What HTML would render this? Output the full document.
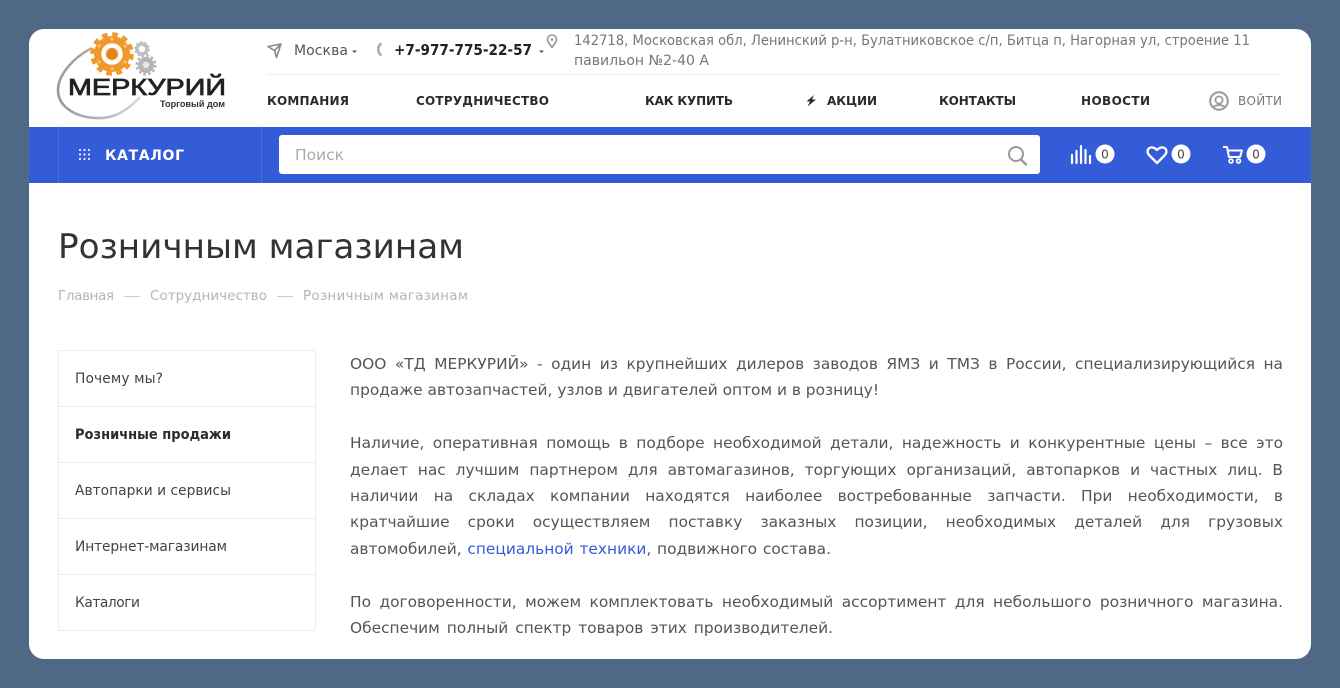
<!DOCTYPE html>
<html lang="ru"><head><meta charset="utf-8"><title>Розничным магазинам</title>
<style>
html,body{margin:0;padding:0}
body{width:1340px;height:688px;overflow:hidden;background:#4e6885;position:relative;font-family:"DejaVu Sans","Liberation Sans",sans-serif}
#card{position:absolute;left:29px;top:29px;width:1282px;height:630px;background:#fff;border-radius:15px;overflow:hidden}
#bar{position:absolute;left:0;top:98px;width:1282px;height:56px;background:#345cd8}
.d{position:absolute;top:0;width:1px;height:56px;background:#4a6ede}
#search{position:absolute;left:250px;top:8px;width:761px;height:39px;background:#fff;border-radius:3px}
#hr{position:absolute;left:238px;top:45px;width:1015px;height:1px;background:#eee}
.row{position:absolute;left:29px;width:256px;height:55px;border:1px solid #ececec}
svg#o{position:absolute;left:0;top:0}
.l{position:absolute;left:350px;width:933px;height:26px;line-height:26px;font-size:15.4px;color:#555;white-space:nowrap;text-align:justify;text-align-last:justify}
.l a{color:#345cd8;text-decoration:none}
</style></head><body>
<div id="card">
<div id="hr"></div>
<div id="bar"><div class="d" style="left:29px"></div><div class="d" style="left:232px"></div><div id="search"></div></div>
<div class="row" style="top:321px;border-radius:2px 2px 0 0"></div>
<div class="row" style="top:377px"></div>
<div class="row" style="top:433px"></div>
<div class="row" style="top:489px"></div>
<div class="row" style="top:545px;border-radius:0 0 2px 2px"></div>
</div>
<svg id="o" width="1340" height="688" viewBox="0 0 1340 688" font-family="'DejaVu Sans','Liberation Sans',sans-serif">
<defs><linearGradient id="rg" x1="0" y1="0" x2="1" y2="0"><stop offset="0" stop-color="#999"/><stop offset=".6" stop-color="#bbb"/><stop offset="1" stop-color="#ddd"/></linearGradient></defs>
<!-- logo -->
<path d="M92 48 C72 58 58 76 58 90 C58 108 78 119 102 118 C118 117 130 108 140 97" fill="none" stroke="url(#rg)" stroke-width="2.6"/>
<circle cx="112" cy="54" r="18" fill="#f0982a"/>
<circle cx="112" cy="54" r="19.800" fill="none" stroke="#f0982a" stroke-width="4" stroke-dasharray="5.700 4.670"/>
<circle cx="112" cy="54" r="8.500" fill="none" stroke="#fff" stroke-width="4.500"/>
<circle cx="112" cy="54" r="5" fill="#e0831c"/>
<g fill="#f9c87a"><circle cx="112" cy="39" r="1.500"/><circle cx="125" cy="46" r="1.500"/><circle cx="125" cy="62" r="1.500"/><circle cx="112" cy="69" r="1.500"/><circle cx="99" cy="62" r="1.500"/><circle cx="99" cy="46" r="1.500"/></g>
<circle cx="146" cy="65" r="8" fill="#b5b5b9"/>
<circle cx="146" cy="65" r="9.300" fill="none" stroke="#b5b5b9" stroke-width="2.400" stroke-dasharray="2.600 2.270"/>
<circle cx="146" cy="65" r="3.200" fill="#e8e8ea"/>
<circle cx="142" cy="49" r="5" fill="none" stroke="#c0c0c4" stroke-width="3.500"/>
<circle cx="142" cy="49" r="7" fill="none" stroke="#c4c4c8" stroke-width="1.800" stroke-dasharray="2.300 2.100"/>
<text x="68" y="95" font-family="'Liberation Sans',sans-serif" font-size="23.500" fill="#222" stroke="#222" stroke-width=".8" textLength="158" lengthAdjust="spacingAndGlyphs">МЕРКУРИЙ</text>
<text x="160" y="107" font-family="'Liberation Sans',sans-serif" font-weight="700" font-size="9" fill="#333" textLength="65" lengthAdjust="spacingAndGlyphs">Торговый дом</text>
<!-- top row -->
<path d="M268 46.500 L281 44 L276.500 57.500 L274.500 50.500 Z M274.500 50.500 L281 44" fill="none" stroke="#888" stroke-width="1.600" stroke-linejoin="round"/>
<text x="294" y="55" font-size="14" fill="#555" textLength="54">Москва</text>
<path d="M352 50.500h5l-2.500 2.500z" fill="#555"/>
<path d="M381.500 43.500 C377.500 45.500 377 52.500 381.500 55.500" fill="none" stroke="#aaa" stroke-width="2.500"/>
<text x="394" y="55" font-size="15.500" font-weight="700" fill="#222" textLength="138" lengthAdjust="spacingAndGlyphs">+7-977-775-22-57</text>
<path d="M539 50.500h5l-2.500 2.500z" fill="#555"/>
<path d="M552 47.500 C549 43.500 547.500 41.500 547.500 39.500 A4.500 4.500 0 0 1 556.500 39.500 C556.500 41.500 555 43.500 552 47.500 Z" fill="none" stroke="#999" stroke-width="1.600"/><circle cx="552" cy="39.500" r="1.300" fill="#999"/>
<text x="574" y="45" font-size="14" fill="#777" textLength="676" lengthAdjust="spacingAndGlyphs">142718, Московская обл, Ленинский р-н, Булатниковское с/п, Битца п, Нагорная ул, строение 11</text>
<text x="574" y="65" font-size="14" fill="#777" textLength="135" lengthAdjust="spacingAndGlyphs">павильон №2-40 А</text>
<!-- nav -->
<g font-size="12" font-weight="700" fill="#2b2b2b">
<text x="267" y="105" textLength="82">КОМПАНИЯ</text>
<text x="416" y="105" textLength="133">СОТРУДНИЧЕСТВО</text>
<text x="645" y="105" textLength="88">КАК КУПИТЬ</text>
<text x="827" y="105" textLength="50">АКЦИИ</text>
<text x="939" y="105" textLength="77">КОНТАКТЫ</text>
<text x="1081" y="105" textLength="69">НОВОСТИ</text>
</g>
<path d="M814 95 L806.500 101.500 H810 L807.500 106.500 L816 99.500 H812 Z" fill="#2b2b2b"/>
<circle cx="1219" cy="101" r="8.800" fill="none" stroke="#999" stroke-width="2"/><circle cx="1219" cy="100" r="3.600" fill="none" stroke="#999" stroke-width="1.700"/><path d="M1213 107 Q1219 103 1225 107" fill="none" stroke="#999" stroke-width="1.700"/>
<text x="1238" y="105" font-size="12" fill="#777" textLength="44">ВОЙТИ</text>
<!-- bar -->
<g fill="#eef2fd"><circle cx="80" cy="150" r="1.100"/><circle cx="84.500" cy="150" r="1.100"/><circle cx="89" cy="150" r="1.100"/><circle cx="80" cy="154.500" r="1.100"/><circle cx="84.500" cy="154.500" r="1.100"/><circle cx="89" cy="154.500" r="1.100"/><circle cx="80" cy="159" r="1.100"/><circle cx="84.500" cy="159" r="1.100"/><circle cx="89" cy="159" r="1.100"/></g>
<text x="105" y="160" font-size="14" font-weight="700" fill="#fff" textLength="79">КАТАЛОГ</text>
<text x="295" y="160" font-size="15.500" fill="#aaa" textLength="49">Поиск</text>
<circle cx="1016" cy="154" r="7" fill="none" stroke="#999" stroke-width="2"/><path d="M1021 159.500 L1026 164.500" stroke="#999" stroke-width="2.400" stroke-linecap="round"/>
<path d="M1072 155v8M1076.500 151v12M1081 146v17M1085.500 150v13M1090 156v7" stroke="#fff" stroke-width="2.200" stroke-linecap="round"/>
<path d="M1157 163 L1149 155 C1144.500 149.500 1151.500 144 1157 150 C1162.500 144 1169.500 149.500 1165 155 Z" fill="none" stroke="#fff" stroke-width="2.300" stroke-linejoin="round"/>
<path d="M1223 147 H1227 L1229 157 H1240 L1242 150.500 H1228" fill="none" stroke="#fff" stroke-width="2" stroke-linejoin="round"/><circle cx="1231" cy="161" r="1.900" fill="none" stroke="#fff" stroke-width="1.700"/><circle cx="1238.500" cy="161" r="1.900" fill="none" stroke="#fff" stroke-width="1.700"/>
<g fill="#fff"><circle cx="1105" cy="154" r="9.500"/><circle cx="1181" cy="154" r="9.500"/><circle cx="1256" cy="154" r="9.500"/></g>
<g font-size="12" fill="#444" text-anchor="middle"><text x="1105" y="158.500">0</text><text x="1181" y="158.500">0</text><text x="1256" y="158.500">0</text></g>
<!-- title -->
<text x="58" y="258" font-size="34" fill="#333" textLength="406" lengthAdjust="spacingAndGlyphs">Розничным магазинам</text>
<g font-size="13.500" fill="#b5b5b5">
<text x="58" y="300" textLength="56">Главная</text>
<text x="150" y="300" textLength="117">Сотрудничество</text>
<text x="303" y="300" textLength="165">Розничным магазинам</text>
</g>
<path d="M124 296.500h16M277 296.500h16" stroke="#ccc" stroke-width="1"/>
<!-- side -->
<g font-size="13.800" fill="#444">
<text x="75" y="383" textLength="88">Почему мы?</text>
<text x="75" y="495" textLength="156">Автопарки и сервисы</text>
<text x="75" y="551" textLength="152">Интернет-магазинам</text>
<text x="75" y="607" textLength="65">Каталоги</text>
</g>
<text x="75" y="439" font-size="13.800" font-weight="700" fill="#2b2b2b" textLength="156" lengthAdjust="spacingAndGlyphs">Розничные продажи</text>
</svg>
<div class="l" style="top:351px">ООО «ТД МЕРКУРИЙ» - один из крупнейших дилеров заводов ЯМЗ и ТМЗ в России, специализирующийся на</div>
<div class="l" style="top:377px;width:528px">продаже автозапчастей, узлов и двигателей оптом и в розницу!</div>
<div class="l" style="top:430px">Наличие, оперативная помощь в подборе необходимой детали, надежность и конкурентные цены – все это</div>
<div class="l" style="top:457px">делает нас лучшим партнером для автомагазинов, торгующих организаций, автопарков и частных лиц. В</div>
<div class="l" style="top:483px">наличии на складах компании находятся наиболее востребованные запчасти. При необходимости, в</div>
<div class="l" style="top:509px">кратчайшие сроки осуществляем поставку заказных позиции, необходимых деталей для грузовых</div>
<div class="l" style="top:536px;width:481px">автомобилей, <a>специальной техники</a>, подвижного состава.</div>
<div class="l" style="top:589px">По договоренности, можем комплектовать необходимый ассортимент для небольшого розничного магазина.</div>
<div class="l" style="top:615px;width:483px">Обеспечим полный спектр товаров этих производителей.</div>
</body></html>
